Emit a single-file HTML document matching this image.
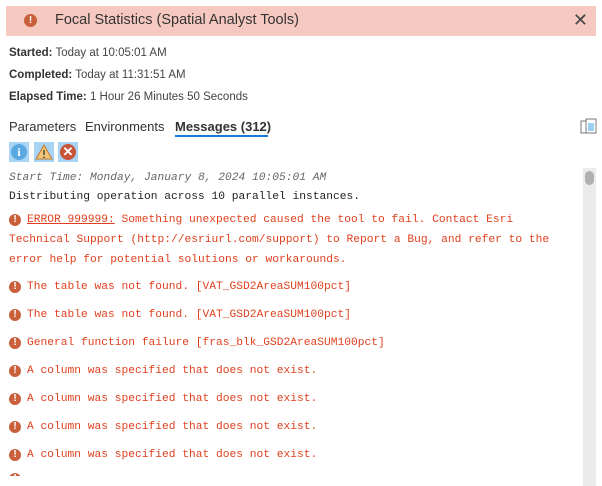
<!DOCTYPE html>
<html><head><style>
body{margin:0;width:602px;height:486px;overflow:hidden;background:#fff;font-family:"Liberation Sans",sans-serif;position:relative}
.hdr{position:absolute;left:6px;top:6px;width:590px;height:30px;background:#f6c9c0}
.hdr .t{position:absolute;left:49px;top:6px;font-size:14.5px;color:#333}
.hdr .x{position:absolute;right:8px;top:4px;font-size:18px;color:#444}
.ic{position:absolute;width:12px;height:12px;border-radius:50%;background:#c8603c;color:#fff;font:bold 10px/12px "Liberation Sans",sans-serif;text-align:center}
.info{position:absolute;left:9px;font-size:11.5px;color:#444}
.info b{color:#333}
.tabs{position:absolute;top:119px;left:9px;font-size:13px;color:#333}
.tabs span{position:absolute;white-space:nowrap}
.btn{position:absolute;top:142px;width:20px;height:20px;background:#a8d5f5}
.m{position:absolute;left:9px;font:11.25px "Liberation Mono",monospace;white-space:nowrap;color:#222}
.e{color:#e0401e}
.e .ic{left:0;top:0}
.e span.tx{padding-left:18px}
</style></head><body>
<div class="hdr"><div class="ic" style="left:18px;top:8px;width:13px;height:13px;line-height:13px">!</div><div class="t">Focal Statistics (Spatial Analyst Tools)</div><div class="x">✕</div></div>
<div class="info" style="top:47px"><b>Started:</b> Today at 10:05:01 AM</div>
<div class="info" style="top:69px"><b>Completed:</b> Today at 11:31:51 AM</div>
<div class="info" style="top:91px"><b>Elapsed Time:</b> 1 Hour 26 Minutes 50 Seconds</div>
<div class="tabs"><span style="left:0">Parameters</span><span style="left:76px">Environments</span><span style="left:166px;font-weight:bold;color:#333">Messages (312)</span></div>
<div style="position:absolute;left:175px;top:135px;width:93px;height:2px;background:#1c7ad0"></div>
<svg style="position:absolute;left:580px;top:118px" width="17" height="17"><rect x="1" y="3" width="10" height="12" fill="#fff" stroke="#777"/><rect x="6" y="1" width="10" height="14" fill="#fff" stroke="#777"/><path d="M8 6h6M8 8h6M8 10h6M8 12h6" stroke="#39a0e0"/></svg>
<div class="btn" style="left:9px"><div style="position:absolute;left:2px;top:2px;width:16px;height:16px;border-radius:50%;background:#5aa8e0;color:#fff;font:bold 12px/16px 'Liberation Serif',serif;text-align:center">i</div></div>
<div class="btn" style="left:34px"><svg width="20" height="20"><path d="M10 3L18 17H2Z" fill="#f2c27a" stroke="#c07a30"/><path d="M10 8v5M10 14.5v1.5" stroke="#553" stroke-width="1.6"/></svg></div>
<div class="btn" style="left:58px"><div style="position:absolute;left:2px;top:2px;width:16px;height:16px;border-radius:50%;background:#c8553a;color:#fff;font:bold 13px/16px 'Liberation Sans',sans-serif;text-align:center">✕</div></div>
<div style="position:absolute;left:583px;top:168px;width:13px;height:318px;background:#ebebeb"><div style="position:absolute;left:2px;top:3px;width:9px;height:14px;border-radius:5px;background:#b0b0b0"></div></div>
<div class="m" style="top:172px;font-style:italic;color:#666">Start Time: Monday, January 8, 2024 10:05:01 AM</div>
<div class="m" style="top:191px">Distributing operation across 10 parallel instances.</div>
<div class="m e" style="top:210px;line-height:20px"><div class="ic" style="top:4px">!</div><span class="tx"><u>ERROR 999999:</u> Something unexpected caused the tool to fail. Contact Esri</span><br>Technical Support (http://esriurl.com/support) to Report a Bug, and refer to the<br>error help for potential solutions or workarounds.</div>
<div style="position:absolute;left:0;top:0;width:602px;height:476px;overflow:hidden">
<div class="m e" style="top:281px"><div class="ic">!</div><span class="tx">The table was not found. [VAT_GSD2AreaSUM100pct]</span></div>
<div class="m e" style="top:309px"><div class="ic">!</div><span class="tx">The table was not found. [VAT_GSD2AreaSUM100pct]</span></div>
<div class="m e" style="top:337px"><div class="ic">!</div><span class="tx">General function failure [fras_blk_GSD2AreaSUM100pct]</span></div>
<div class="m e" style="top:365px"><div class="ic">!</div><span class="tx">A column was specified that does not exist.</span></div>
<div class="m e" style="top:393px"><div class="ic">!</div><span class="tx">A column was specified that does not exist.</span></div>
<div class="m e" style="top:421px"><div class="ic">!</div><span class="tx">A column was specified that does not exist.</span></div>
<div class="m e" style="top:449px"><div class="ic">!</div><span class="tx">A column was specified that does not exist.</span></div>
<div class="m e" style="top:473px"><div class="ic">!</div></div>
</div>
</body></html>
